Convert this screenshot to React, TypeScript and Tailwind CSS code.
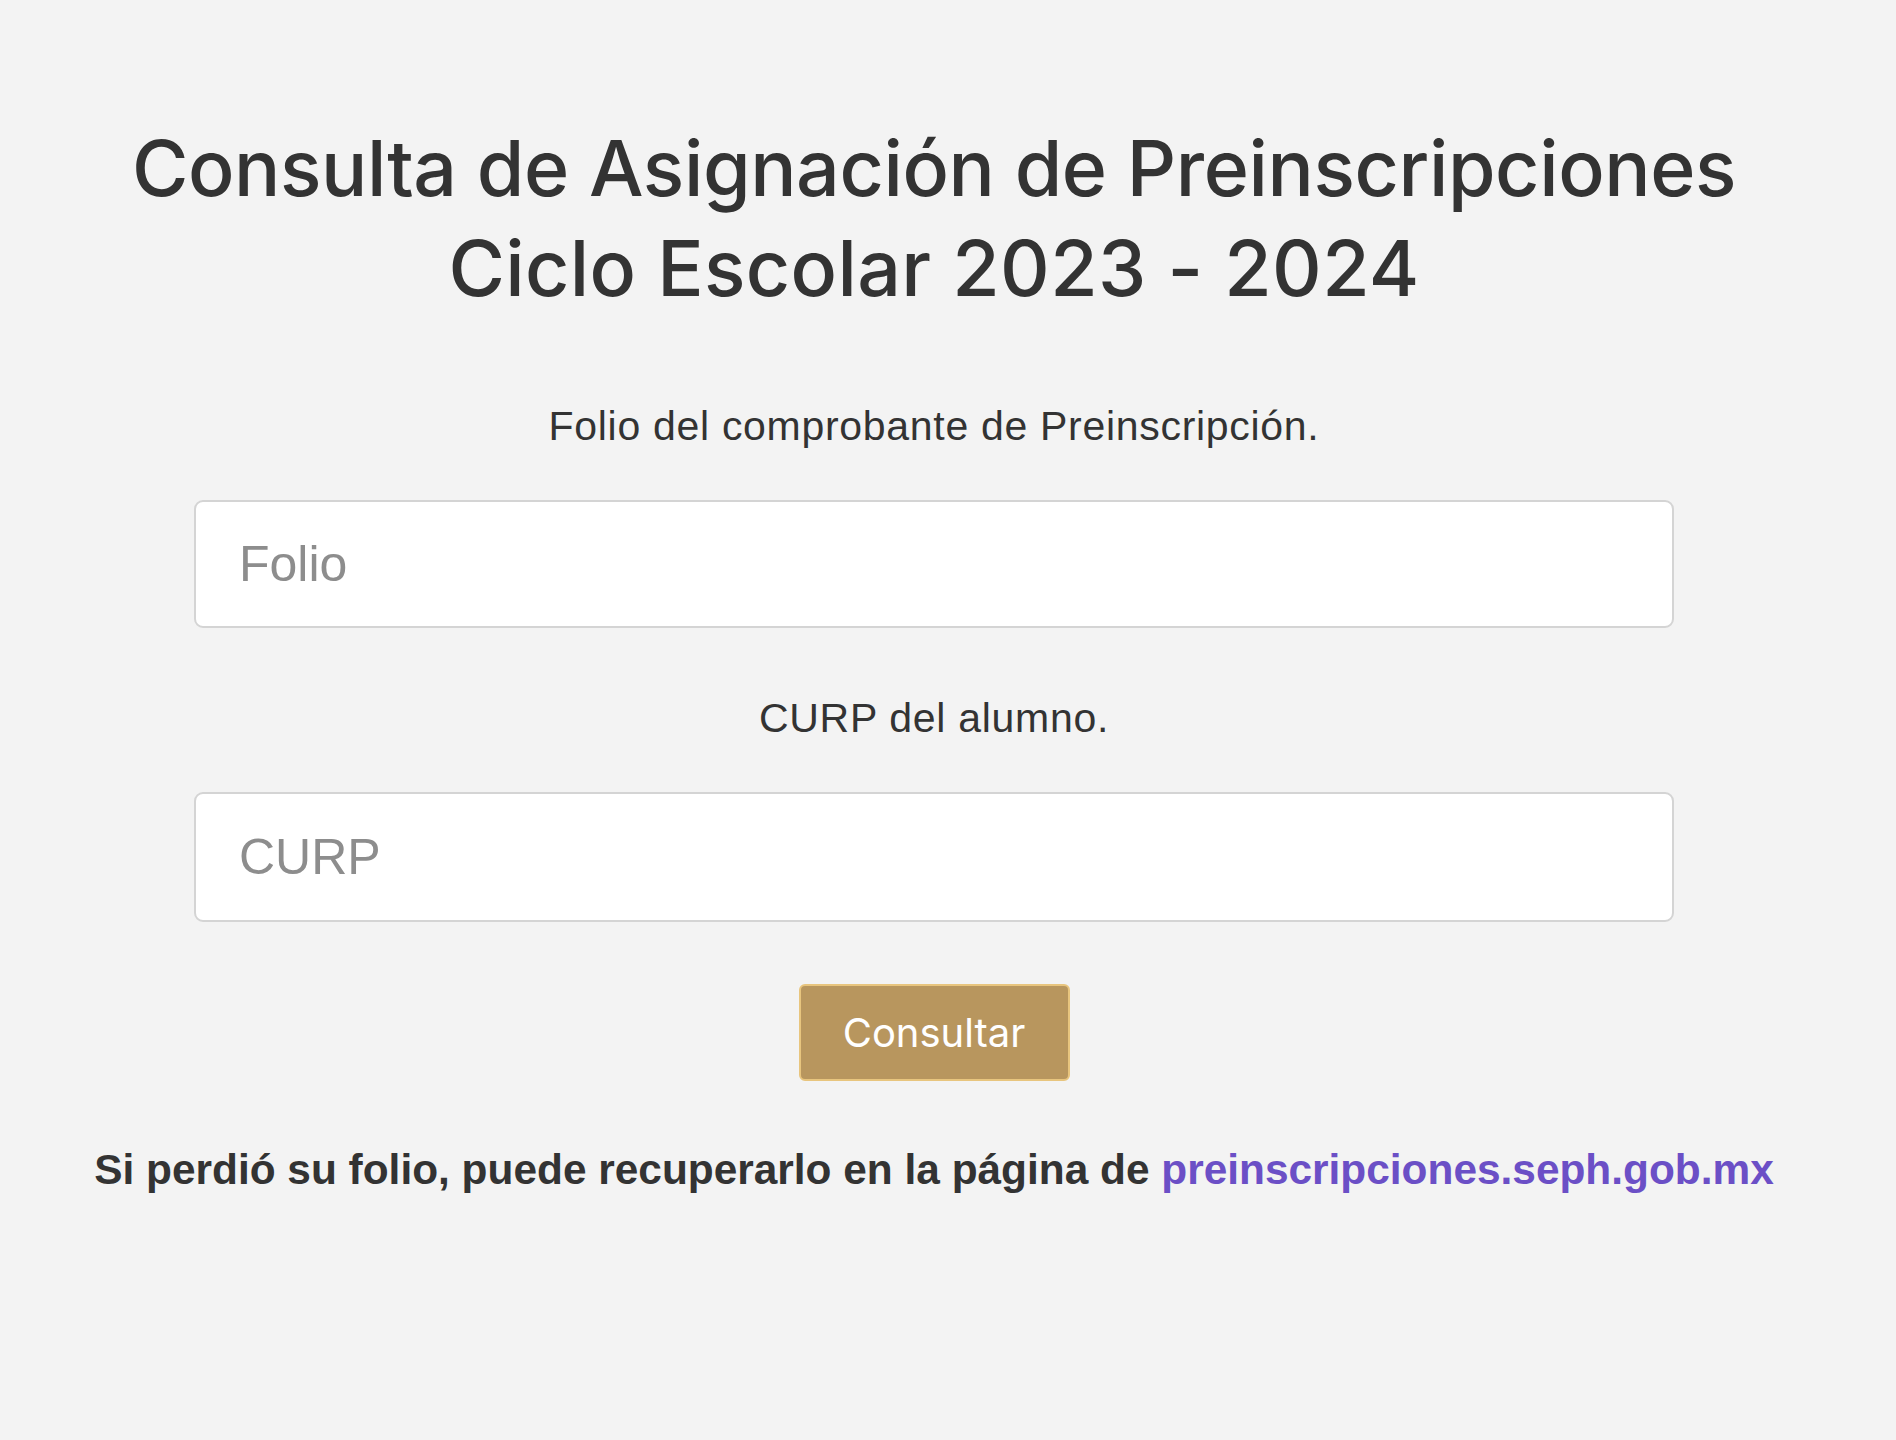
export default function App() {
  return (
    <div className="min-h-[1440px] w-full bg-[#f3f3f3] text-[#333333]">
      <div className="w-[1868px] flex flex-col items-center pt-[118px]">
        <h1 className="text-center font-['Inter',sans-serif] text-[77px] leading-[100px] font-medium tracking-[-0.4px]">
          Consulta de Asignación de Preinscripciones
          <br />
          <span className="tracking-[0.35px]">Ciclo Escolar 2023 - 2024</span>
        </h1>

        <form className="mt-[84px] flex w-[1480px] flex-col items-center" onSubmit={(e) => e.preventDefault()}>
          <label className="font-['Liberation_Sans',Arial,sans-serif] text-[41px] leading-[48px] tracking-[0.7px]">
            Folio del comprobante de Preinscripción.
          </label>
          <input
            type="text"
            placeholder="Folio"
            className="mt-[50px] h-[128px] w-full rounded-[9px] border-2 border-[#d4d4d4] bg-white px-[43px] font-['Liberation_Sans',Arial,sans-serif] text-[50px] text-[#333] placeholder:text-[#8d8d8d] outline-none"
          />

          <label className="mt-[66px] font-['Liberation_Sans',Arial,sans-serif] text-[41px] leading-[48px] tracking-[0.7px]">
            CURP del alumno.
          </label>
          <input
            type="text"
            placeholder="CURP"
            className="mt-[50px] h-[130px] w-full rounded-[9px] border-2 border-[#d4d4d4] bg-white px-[43px] font-['Liberation_Sans',Arial,sans-serif] text-[50px] text-[#333] placeholder:text-[#8d8d8d] outline-none"
          />

          <button
            type="submit"
            className="mt-[62px] h-[97px] w-[271px] rounded-[6px] border-2 border-[#e8c57e] bg-[#b8965e] font-['Inter',sans-serif] text-[40px] text-white"
          >
            Consultar
          </button>
        </form>

        <p className="mt-[64px] font-['Liberation_Sans',Arial,sans-serif] text-[42.4px] leading-[50px] font-bold">
          Si perdió su folio, puede recuperarlo en la página de{" "}
          <a href="#" className="text-[#6b4fc6]">
            preinscripciones.seph.gob.mx
          </a>
        </p>
      </div>
    </div>
  );
}
